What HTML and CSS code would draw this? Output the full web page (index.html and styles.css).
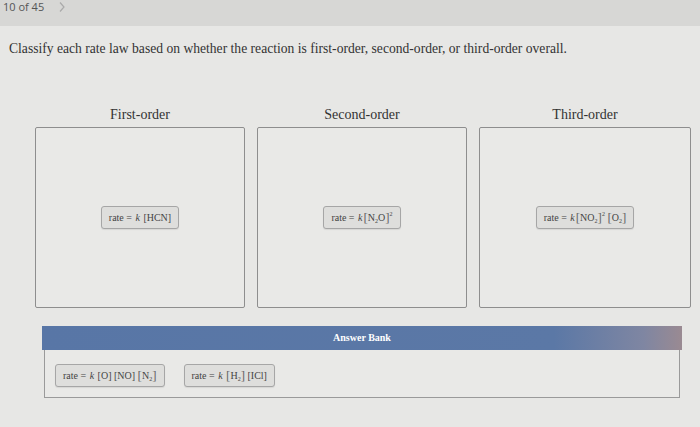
FILE: index.html
```html
<!DOCTYPE html>
<html lang="en">
    <head>
        <meta charset="UTF-8" />
        <title>Classify rate laws</title>
        <link rel="stylesheet" href="styles.css">
    </head>
    <body>
        <div class="topbar">
            <span class="count">10 of 45</span>
            <svg class="next" width="8" height="12" viewBox="0 0 8 12">
                <path d="M2 1.5 L6 6 L2 10.5" fill="none" stroke="#aaa" stroke-width="1.2" />
            </svg>
        </div>

        <p class="question">
            Classify each rate law based on whether the reaction is first-order, second-order, or third-order overall.
        </p>

        <div class="bins">
            <div class="bin">
                <div class="bin-title">First-order</div>
                <div class="bin-box">
                    <span class="chip">rate = <i>k</i> [HCN]</span>
                </div>
            </div>
            <div class="bin">
                <div class="bin-title">Second-order</div>
                <div class="bin-box">
                    <span class="chip">rate = <i>k</i><span class="br">[</span>N<sub>2</sub>O<span class="br">]</span><sup>2</sup></span>
                </div>
            </div>
            <div class="bin">
                <div class="bin-title">Third-order</div>
                <div class="bin-box">
                    <span class="chip">rate = <i>k</i><span class="br">[</span>NO<sub>2</sub><span class="br">]</span><sup>2</sup> <span class="br">[</span>O<sub>2</sub><span class="br">]</span></span>
                </div>
            </div>
        </div>

        <div class="bank">
            <div class="bank-head">Answer Bank</div>
            <div class="bank-body">
                <span class="chip">rate = <i>k</i> [O] [NO] <span class="br">[</span>N<sub>2</sub><span class="br">]</span></span>
                <span class="chip">rate = <i>k</i> <span class="br">[</span>H<sub>2</sub><span class="br">]</span> [ICl]</span>
            </div>
        </div>
    </body>
</html>
```

FILE: styles.css
```css
body {
    margin: 0;
    width: 700px;
    height: 427px;
    overflow: hidden;
    background: #e7e7e5;
    color: #333;
    font-family: "Liberation Serif", serif;
}

.topbar {
    height: 26px;
    background: #d7d7d5;
    display: flex;
    align-items: flex-start;
    gap: 14px;
    padding-left: 3px;
    font-family: "Open Sans", sans-serif;
    font-size: 11px;
    color: #555;
}

.topbar .count {
    line-height: 14px;
}

.topbar .next {
    margin-top: 1px;
}

.question {
    margin: 15px 0 0 9px;
    font-size: 13.6px;
    color: #333;
}

.bins {
    display: grid;
    grid-template-columns: 210px 210px 212px;
    gap: 12px;
    padding-left: 35px;
    margin-top: 50px;
}

.bin-title {
    text-align: center;
    font-size: 14px;
    height: 20px;
}

.bin-box {
    height: 179px;
    border: 1px solid #8e8e8e;
    border-radius: 2px;
    background: #e9e9e7;
    display: flex;
    align-items: center;
    justify-content: center;
}

.chip {
    display: inline-block;
    height: 21px;
    line-height: 21px;
    padding: 0 7px;
    font-size: 10px;
    color: #444;
    background: #dededc;
    border: 1px solid #a6a6a6;
    border-radius: 3px;
    box-shadow: 0 1px 1px rgba(0, 0, 0, 0.08);
    white-space: nowrap;
}

.chip i {
    margin: 0 1px;
}

.chip .br {
    font-size: 13px;
    color: #666;
    vertical-align: -1px;
}

.chip sub,
.chip sup {
    font-size: 6px;
    line-height: 0;
}

.chip sub {
    vertical-align: -2px;
}

.chip sup {
    vertical-align: 5px;
}

.bank {
    margin: 18px 18px 0 42px;
}

.bank-head {
    height: 24px;
    line-height: 24px;
    text-align: center;
    color: #fff;
    font-size: 10px;
    font-weight: bold;
    background: linear-gradient(to right, #5876a6 0%, #5b78a6 80%, #7f86a2 94%, #9a8a92 100%);
}

.bank-body {
    display: flex;
    align-items: flex-start;
    gap: 19px;
    padding: 14px 10px 10px;
    height: 23px;
    margin: 0 2px;
    border: 1px solid #9a9a9a;
    border-top: none;
    background: #e9e9e7;
}
```
